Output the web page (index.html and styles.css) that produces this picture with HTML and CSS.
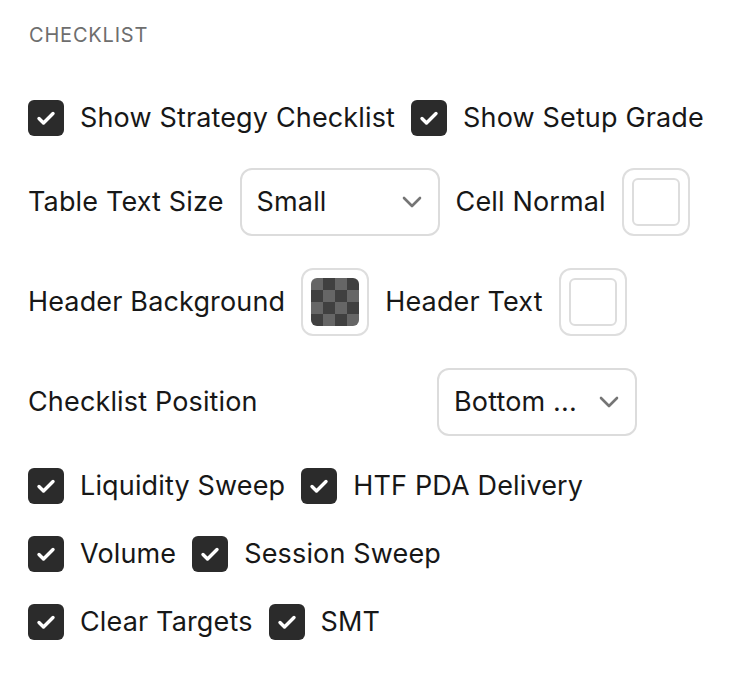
FILE: index.html
```html
<!DOCTYPE html>
<html>
<head>
<meta charset="utf-8">
<link rel="stylesheet" href="styles.css">
</head>
<body>
<div class="panel">
  <div class="heading">CHECKLIST</div>
  <div class="rows">
    <div class="row">
      <label class="check"><span class="box"><svg viewBox="0 0 36 36"><path d="M11 18.5l4.5 4.5 9.5-9.5" /></svg></span><span>Show Strategy Checklist</span></label>
      <label class="check"><span class="box"><svg viewBox="0 0 36 36"><path d="M11 18.5l4.5 4.5 9.5-9.5" /></svg></span><span>Show Setup Grade</span></label>
    </div>
    <div class="row">
      <span class="label">Table Text Size</span>
      <div class="select"><span>Small</span><svg class="chev" viewBox="0 0 20 12"><path d="M2 2l8 8 8-8" /></svg></div>
      <span class="label">Cell Normal</span>
      <div class="swatch"><div class="inner white"></div></div>
    </div>
    <div class="row">
      <span class="label">Header Background</span>
      <div class="swatch"><div class="inner checker"></div></div>
      <span class="label">Header Text</span>
      <div class="swatch"><div class="inner white"></div></div>
    </div>
    <div class="row">
      <span class="label wide">Checklist Position</span>
      <div class="select"><span>Bottom ...</span><svg class="chev" viewBox="0 0 20 12"><path d="M2 2l8 8 8-8" /></svg></div>
    </div>
    <div class="row">
      <label class="check"><span class="box"><svg viewBox="0 0 36 36"><path d="M11 18.5l4.5 4.5 9.5-9.5" /></svg></span><span>Liquidity Sweep</span></label>
      <label class="check"><span class="box"><svg viewBox="0 0 36 36"><path d="M11 18.5l4.5 4.5 9.5-9.5" /></svg></span><span>HTF PDA Delivery</span></label>
    </div>
    <div class="row">
      <label class="check"><span class="box"><svg viewBox="0 0 36 36"><path d="M11 18.5l4.5 4.5 9.5-9.5" /></svg></span><span>Volume</span></label>
      <label class="check"><span class="box"><svg viewBox="0 0 36 36"><path d="M11 18.5l4.5 4.5 9.5-9.5" /></svg></span><span>Session Sweep</span></label>
    </div>
    <div class="row">
      <label class="check"><span class="box"><svg viewBox="0 0 36 36"><path d="M11 18.5l4.5 4.5 9.5-9.5" /></svg></span><span>Clear Targets</span></label>
      <label class="check"><span class="box"><svg viewBox="0 0 36 36"><path d="M11 18.5l4.5 4.5 9.5-9.5" /></svg></span><span>SMT</span></label>
    </div>
  </div>
</div>
</body>
</html>
```
FILE: styles.css
```css
html, body {
  margin: 0;
  padding: 0;
  background: #ffffff;
}
body {
  font-family: Inter, "Noto Sans", sans-serif;
  color: #171717;
}
.panel {
  padding: 22px 28px 0 28px;
}
.heading {
  font-size: 20px;
  color: #6e6e6e;
  letter-spacing: 0.8px;
  line-height: 26px;
  padding-left: 1px;
}
.rows {
  margin-top: 52px;
  display: flex;
  flex-direction: column;
  gap: 32px;
}
.row {
  display: flex;
  align-items: center;
  gap: 16px;
  font-size: 27px;
  line-height: 36px;
  letter-spacing: 0.15px;
}
.label.wide {
  width: 393px;
}
.check {
  display: flex;
  align-items: center;
  gap: 16px;
}
.box {
  width: 36px;
  height: 36px;
  border-radius: 6px;
  background: #2b2b2b;
  display: block;
}
.box svg {
  width: 36px;
  height: 36px;
  display: block;
}
.box path {
  fill: none;
  stroke: #ffffff;
  stroke-width: 3.4;
  stroke-linecap: round;
  stroke-linejoin: round;
}
.select {
  box-sizing: border-box;
  width: 200px;
  height: 68px;
  border: 2px solid #dcdcdc;
  border-radius: 12px;
  display: flex;
  align-items: center;
  justify-content: space-between;
  padding: 0 16px 0 15px;
}
.chev {
  width: 20px;
  height: 12px;
}
.chev path {
  fill: none;
  stroke: #757575;
  stroke-width: 2.6;
  stroke-linecap: round;
  stroke-linejoin: round;
}
.swatch {
  box-sizing: border-box;
  width: 68px;
  height: 68px;
  border: 2px solid #dedede;
  border-radius: 12px;
  padding: 8px;
}
.inner {
  box-sizing: border-box;
  width: 48px;
  height: 48px;
  border-radius: 6px;
}
.inner.white {
  border: 2px solid #dddddd;
  background: #ffffff;
}
.inner.checker {
  background-color: #666666;
  background-image:
    linear-gradient(45deg, #404040 25%, transparent 25%, transparent 75%, #404040 75%),
    linear-gradient(45deg, #404040 25%, transparent 25%, transparent 75%, #404040 75%);
  background-size: 24px 24px;
  background-position: 0 0, 12px 12px;
}
```
